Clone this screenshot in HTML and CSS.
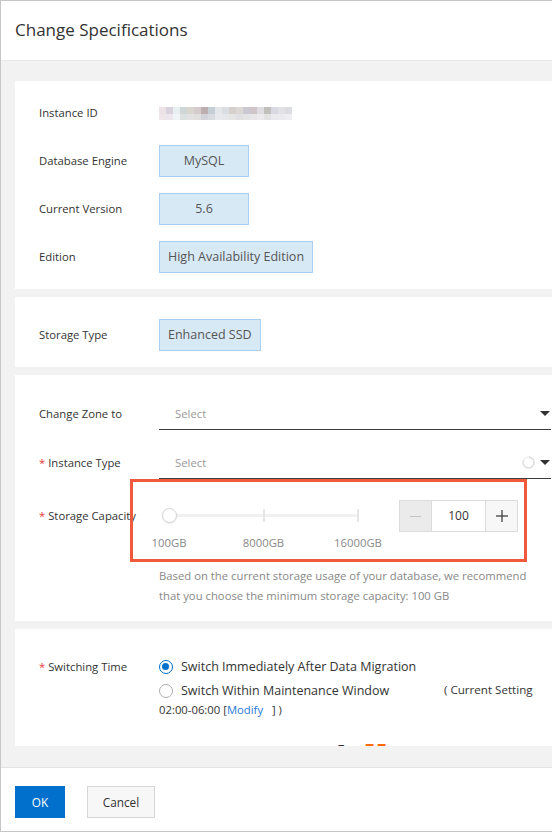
FILE: index.html
```html
<!DOCTYPE html>
<html lang="en">
<head>
<meta charset="utf-8">
<title>Change Specifications</title>
<link rel="stylesheet" href="styles.css">
</head>
<body>
<div class="dialog">
  <div class="dlg-header"><h1 class="dlg-title">Change Specifications</h1></div>
  <div class="dlg-body">
    <section class="card card-basic">
      <div class="row">
        <div class="label">Instance ID</div>
        <div class="value"><span class="mosaic" aria-label="instance id (masked)"></span></div>
      </div>
      <div class="row">
        <div class="label">Database Engine</div>
        <div class="value"><span class="tag">MySQL</span></div>
      </div>
      <div class="row">
        <div class="label">Current Version</div>
        <div class="value"><span class="tag">5.6</span></div>
      </div>
      <div class="row">
        <div class="label">Edition</div>
        <div class="value"><span class="tag">High Availability Edition</span></div>
      </div>
    </section>

    <section class="card card-storage">
      <div class="row">
        <div class="label">Storage Type</div>
        <div class="value"><span class="tag">Enhanced SSD</span></div>
      </div>
    </section>

    <section class="card card-config">
      <div class="row">
        <div class="label">Change Zone to</div>
        <div class="select">
          <span class="placeholder">Select</span>
          <svg class="caret" width="10" height="5" viewBox="0 0 10 5"><polygon points="0,0 10,0 5,5" fill="#333"/></svg>
        </div>
      </div>
      <div class="row row-instance">
        <div class="label"><span class="req">*</span> Instance Type</div>
        <div class="select">
          <span class="placeholder">Select</span>
          <svg class="spinner" width="13" height="13" viewBox="0 0 13 13"><path d="M6.5 1 A5.5 5.5 0 1 1 1.6 4" fill="none" stroke="#d9d9d9" stroke-width="1.3"/><path d="M1.6 4 A5.5 5.5 0 0 1 6.5 1" fill="none" stroke="#f0f0f0" stroke-width="1.3"/></svg>
          <svg class="caret" width="10" height="5" viewBox="0 0 10 5"><polygon points="0,0 10,0 5,5" fill="#333"/></svg>
        </div>
      </div>
      <div class="row row-capacity">
        <div class="label"><span class="req">*</span> Storage Capacity</div>
        <div class="capacity">
          <div class="slider">
            <div class="slider-rail">
              <div class="track"></div>
              <span class="tick tick-mid"></span>
              <span class="tick tick-end"></span>
              <span class="handle"></span>
            </div>
            <div class="slider-marks">
              <span class="mark mark-start">100GB</span>
              <span class="mark mark-mid">8000GB</span>
              <span class="mark mark-end">16000GB</span>
            </div>
          </div>
          <div class="stepper">
            <span class="step step-minus"><svg width="11" height="11" viewBox="0 0 11 11"><line x1="0" y1="5.5" x2="11" y2="5.5" stroke="#c4c4c4" stroke-width="1"/></svg></span>
            <span class="step-input">100</span>
            <span class="step step-plus"><svg width="12" height="12" viewBox="0 0 12 12"><line x1="0" y1="6" x2="12" y2="6" stroke="#333" stroke-width="1.2"/><line x1="6" y1="0" x2="6" y2="12" stroke="#333" stroke-width="1.2"/></svg></span>
          </div>
        </div>
      </div>
      <p class="help">Based on the current storage usage of your database, we recommend<br>that you choose the minimum storage capacity: 100 GB</p>
      <div class="highlight"></div>
    </section>

    <section class="card card-switch">
      <div class="row row-switch">
        <div class="label"><span class="req">*</span> Switching Time</div>
        <div class="options">
          <label class="option"><span class="radio radio-on"></span>Switch Immediately After Data Migration</label>
          <div class="option option-window"><label class="option-main"><span class="radio"></span>Switch Within Maintenance Window</label><span class="current">( Current Setting</span></div>
          <div class="window-time">02:00-06:00 [<a class="link">Modify</a>&nbsp;&nbsp; ] )</div>
          <div class="fee"><span class="fee-label">F</span><span class="fee-price">55</span></div>
        </div>
      </div>
    </section>
  </div>
  <div class="dlg-footer">
    <button class="btn btn-primary">OK</button>
    <button class="btn btn-default">Cancel</button>
  </div>
</div>
</body>
</html>
```

FILE: styles.css
```css
* { box-sizing: border-box; }
html, body { margin: 0; padding: 0; }
body {
  width: 552px;
  height: 832px;
  overflow: hidden;
  background: #fff;
  font-family: "Open Sans", "Noto Sans", sans-serif;
  font-size: 11.3px;
  color: #333;
}

.dialog {
  width: 640px;
  height: 832px;
  border: 1px solid #c6c6c6;
  background: #fff;
  display: flex;
  flex-direction: column;
}

.dlg-header {
  height: 59px;
  padding: 17px 0 0 14px;
  flex: none;
}
.dlg-title {
  margin: 0;
  font-size: 17px;
  font-weight: 400;
  line-height: 24px;
  color: #333;
}

.dlg-body {
  height: 707px;
  flex: none;
  background: #f2f2f2;
  border-top: 1px solid #e8e8e8;
  padding: 20px 0 0 14px;
  display: flex;
  flex-direction: column;
  gap: 8px;
  overflow: hidden;
}

.card {
  background: #fff;
  padding: 0 24px;
  position: relative;
  flex: none;
}
.card-basic { padding-top: 16px; padding-bottom: 16px; display: flex; flex-direction: column; gap: 16px; }
.card-storage { padding-top: 22px; padding-bottom: 16px; }
.card-config { padding-top: 23px; padding-bottom: 15px; }
.card-switch { height: 117px; padding-top: 27px; overflow: hidden; }

.row {
  display: flex;
  align-items: flex-start;
  min-height: 32px;
}
.label {
  width: 120px;
  flex: none;
  line-height: 32px;
  color: #333;
  white-space: nowrap;
}
.req { color: #e4393c; }
.value { display: flex; align-items: center; height: 32px; }

.mosaic {
  display: block;
  width: 133px;
  height: 13px;
  margin-top: 1px;
  background:
    linear-gradient(to right, #ebe3e6 0 7px, #d8d2dc 7px 14px, #e7eff1 14px 21px, #cfd6d5 21px 28px, #d9d5cf 28px 35px, #d5cdcd 35px 42px, #bcaeb1 42px 49px, #c6ced5 49px 56px, #e5e6ea 56px 63px, #dadde2 63px 70px, #d6d0cc 70px 77px, #dcd8d6 77px 84px, #c9c8d3 84px 91px, #d0c6ca 91px 98px, #dfdde2 98px 105px, #c1c0bd 105px 112px, #d8d9e2 112px 119px, #e2e2e6 119px 126px, #dcdce3 126px 133px) top left / 100% 7px no-repeat,
    linear-gradient(to right, #eee6e8 0 7px, #ebe7ec 7px 14px, #f0f4f6 14px 21px, #dbe0e1 21px 28px, #e3e1e2 28px 35px, #e1dede 35px 42px, #d3d3d9 42px 49px, #d8dbdf 49px 56px, #e8e9ec 56px 63px, #e6e7ea 63px 70px, #e5e5e6 70px 77px, #e0e0e2 77px 84px, #e4e3e6 84px 91px, #e8e6e8 91px 98px, #eceaec 98px 105px, #e2e2e3 105px 112px, #e9e9ee 112px 119px, #ebebef 119px 126px, #eeeef1 126px 133px) bottom left / 100% 6px no-repeat;
}

.tag {
  display: inline-block;
  min-width: 90px;
  height: 32px;
  line-height: 30px;
  padding: 0 8px;
  text-align: center;
  background: #d8e9f6;
  border: 1px solid #a9cff0;
  color: #555;
  font-size: 12.5px;
  white-space: nowrap;
}

/* select */
.select {
  width: 392px;
  height: 32px;
  border-bottom: 1px solid #3d3d3d;
  display: flex;
  align-items: center;
  padding: 0 1px 0 16px;
  flex: none;
}
.placeholder { color: #999; flex: 1; line-height: 31px; }
.spinner { margin-right: 5px; }
.caret { display: block; }
.row-instance { margin-top: 17px; }

/* capacity */
.row-capacity { margin-top: 21px; }
.capacity { display: flex; gap: 31px; align-items: flex-start; }
.slider { width: 209px; padding: 0 10px; }
.slider-rail { position: relative; height: 32px; }
.track {
  position: absolute;
  left: 0; right: 0; top: 14px;
  height: 3px;
  background: #f0f0f0;
}
.tick {
  position: absolute;
  top: 9px;
  width: 2px;
  height: 13px;
  background: #e6e6e6;
  margin-left: -1px;
}
.tick-mid { left: 50%; }
.tick-end { left: 100%; }
.handle {
  position: absolute;
  left: -7.5px;
  top: 8px;
  width: 15px;
  height: 15px;
  border-radius: 50%;
  background: #fff;
  border: 1px solid #d4d4d4;
  box-shadow: 0 1px 2px rgba(0,0,0,0.08);
}
.slider-marks { position: relative; height: 16px; margin-top: 3px; }
.mark {
  position: absolute;
  top: 0;
  line-height: 16px;
  color: #888;
  transform: translateX(-50%);
  white-space: nowrap;
}
.mark-start { left: 0; }
.mark-mid { left: 50%; }
.mark-end { left: 100%; }

.stepper {
  display: flex;
  height: 32px;
  border: 1px solid #dcdcdc;
}
.step {
  width: 31px;
  display: flex;
  align-items: center;
  justify-content: center;
}
.step-minus { background: #ebebeb; }
.step-plus { background: #f7f7f7; }
.step-input {
  width: 55px;
  background: #fff;
  border-left: 1px solid #dcdcdc;
  border-right: 1px solid #dcdcdc;
  text-align: center;
  line-height: 30px;
  font-size: 12px;
  color: #333;
}

.help {
  margin: 15px 0 0 120px;
  line-height: 20px;
  color: #888;
}

.highlight {
  position: absolute;
  left: 115px;
  top: 104px;
  width: 397px;
  height: 83px;
  border: 3px solid #ef5a3c;
  pointer-events: none;
}

/* switching */
.row-switch .label { line-height: 22px; }
.options { display: flex; flex-direction: column; }
.option {
  display: flex;
  align-items: center;
  height: 22px;
  line-height: 22px;
  color: #333;
  font-size: 12.5px;
}
.option-window { margin-top: 2px; }
.option-main { display: flex; align-items: center; width: 285px; }
.current { color: #333; margin-top: -3px; font-size: 11.6px; }
.radio {
  width: 14px;
  height: 14px;
  border-radius: 50%;
  border: 1px solid #adadad;
  background: #fff;
  margin-right: 8px;
  flex: none;
  position: relative;
}
.radio-on { border: 1.5px solid #0070cc; }
.radio-on::after {
  content: "";
  position: absolute;
  left: 2px; top: 2px;
  width: 7px; height: 7px;
  border-radius: 50%;
  background: #0070cc;
}
.window-time { line-height: 16px; color: #333; }
.link { color: #2a7ad6; text-decoration: none; }

.fee {
  margin-top: 20px;
  padding-left: 178px;
  line-height: 24px;
  height: 24px;
  white-space: nowrap;
}
.fee-label { font-size: 14px; color: #333; display: inline-block; width: 27px; vertical-align: 3px; }
.fee-price { font-size: 20px; font-weight: 700; color: #ff6a00; letter-spacing: 0.5px; }

/* footer */
.dlg-footer {
  flex: 1;
  border-top: 1px solid #e3e3e3;
  padding: 18px 0 0 14px;
  display: flex;
  gap: 22px;
  align-items: flex-start;
}
.btn {
  height: 32px;
  font-family: inherit;
  font-size: 11.8px;
  cursor: pointer;
  margin: 0;
}
.btn-primary {
  width: 50px;
  background: #0070cc;
  border: 1px solid #0070cc;
  color: #fff;
}
.btn-default {
  width: 68px;
  background: #f7f7f7;
  border: 1px solid #d6d6d6;
  color: #333;
}
```
